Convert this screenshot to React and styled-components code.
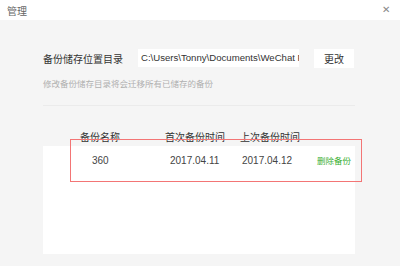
import styled, { createGlobalStyle } from 'styled-components'

const GlobalStyle = createGlobalStyle`
  html, body { margin: 0; padding: 0; background: #f5f5f5; }
  body { font-family: "Liberation Sans", "Noto Sans CJK SC", sans-serif; }
`

const Window = styled.div`
  width: 400px;
  height: 266px;
  background: #f5f5f5;
  display: flex;
  flex-direction: column;
  position: relative;
  overflow: hidden;
`

const TitleBar = styled.div`
  height: 20px;
  background: #fff;
  display: flex;
  align-items: center;
  justify-content: space-between;
  padding: 0 10px 0 7px;
  font-size: 10px;
  color: #666;
`

const Close = styled.span`
  font-size: 10px;
  color: #888;
  line-height: 1;
`

const Body = styled.div`
  padding: 28px 45px 0 43px;
  display: flex;
  flex-direction: column;
`

const PathRow = styled.div`
  display: flex;
  align-items: center;
  height: 20px;
`

const Label = styled.div`
  font-size: 10px;
  color: #333;
  width: 95px;
`

const PathInput = styled.div`
  width: 158px;
  height: 18px;
  background: #fff;
  font-size: 9.6px;
  color: #333;
  line-height: 18px;
  padding-left: 3px;
  white-space: nowrap;
  overflow: hidden;
`

const Button = styled.div`
  margin-left: 15px;
  width: 40px;
  height: 19px;
  background: #fff;
  font-size: 10px;
  color: #333;
  display: flex;
  align-items: center;
  justify-content: center;
`

const Hint = styled.div`
  margin-top: 9px;
  font-size: 8.5px;
  color: #b0b0b0;
`

const Divider = styled.div`
  margin-top: 16px;
  height: 1px;
  background: #ebebeb;
  width: 312px;
`

const Header = styled.div`
  margin-top: 23px;
  display: grid;
  grid-template-columns: 37px 85px 75px 76px;
  font-size: 10px;
  color: #333;
  height: 14px;
`

const HeadCell = styled.div`
  grid-column: ${p => p.col};
  white-space: nowrap;
`

const Table = styled.div`
  margin-top: 3px;
  width: 312px;
  height: 108px;
  background: #fff;
`

const Row = styled.div`
  display: grid;
  grid-template-columns: 49px 78px 72px 75px auto;
  align-items: center;
  height: 28px;
`

const Cell = styled.div`
  white-space: nowrap;
  color: ${p => (p.$green ? '#3cb034' : '#444')};
  font-size: ${p => (p.$green ? '8.5px' : '10px')};
`

const Highlight = styled.div`
  position: absolute;
  left: 70px;
  top: 139px;
  width: 290px;
  height: 41px;
  border: 1px solid #f37575;
  pointer-events: none;
`

function App () {
  return (
    <>
      <GlobalStyle />
      <Window>
        <TitleBar>
          <span>管理</span>
          <Close>✕</Close>
        </TitleBar>
        <Body>
          <PathRow>
            <Label>备份储存位置目录</Label>
            <PathInput>C:\Users\Tonny\Documents\WeChat Files</PathInput>
            <Button>更改</Button>
          </PathRow>
          <Hint>修改备份储存目录将会迁移所有已储存的备份</Hint>
          <Divider />
          <Header>
            <HeadCell col={2}>备份名称</HeadCell>
            <HeadCell col={3}>首次备份时间</HeadCell>
            <HeadCell col={4}>上次备份时间</HeadCell>
          </Header>
          <Table>
            <Row>
              <span />
              <Cell>360</Cell>
              <Cell>2017.04.11</Cell>
              <Cell>2017.04.12</Cell>
              <Cell $green>删除备份</Cell>
            </Row>
          </Table>
        </Body>
        <Highlight />
      </Window>
    </>
  )
}

export default App
